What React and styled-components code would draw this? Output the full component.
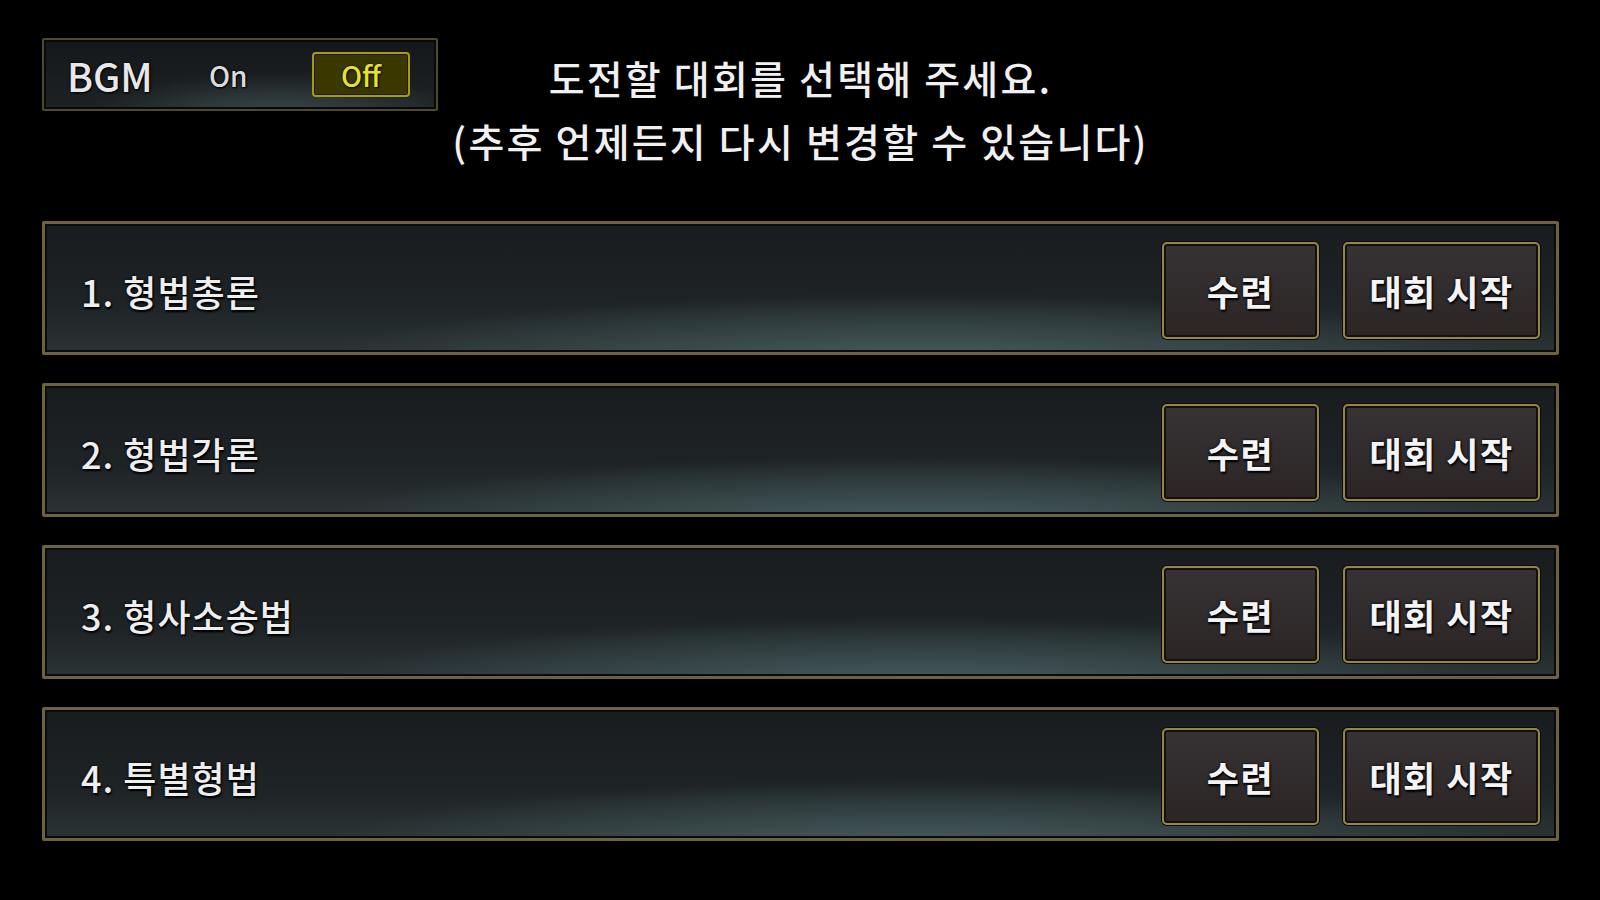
import React from "react";
import styled, { createGlobalStyle } from "styled-components";

const GlobalStyle = createGlobalStyle`
  html, body {
    margin: 0;
    padding: 0;
    background: #000;
  }
  body {
    font-family: "Noto Sans CJK KR", "Noto Sans", sans-serif;
    color: #f2f2f2;
  }
`;

const courses = [
  { id: 1, name: "형법총론" },
  { id: 2, name: "형법각론" },
  { id: 3, name: "형사소송법" },
  { id: 4, name: "특별형법" },
];

const Screen = styled.div`
  width: 1600px;
  height: 900px;
  box-sizing: border-box;
  padding: 38px 41px 0 42px;
  background: #000;
  overflow: hidden;
`;

const Header = styled.div`
  display: grid;
  grid-template-columns: 1fr auto 1fr;
  align-items: start;
`;

const BgmBox = styled.div`
  justify-self: start;
  width: 396px;
  height: 73px;
  box-sizing: border-box;
  display: flex;
  align-items: center;
  padding: 0 26px 0 23px;
  border: 2px solid #4f4930;
  box-shadow: inset 0 0 0 2px #08090a;
  border-radius: 2px;
  background: radial-gradient(
      ellipse 70% 90% at 60% 110%,
      rgba(70, 86, 88, 0.75),
      rgba(0, 0, 0, 0) 70%
    ),
    linear-gradient(#15181a, #1d2224);
`;

const BgmLabel = styled.span`
  font-size: 39px;
  font-weight: 500;
  color: #e8e8e8;
  text-shadow: 0 0 3px #000, 1px 1px 2px #000;
  width: 140px;
`;

const Toggle = styled.span`
  font-size: 28px;
  font-weight: 500;
  display: flex;
  align-items: center;
  justify-content: center;
  height: 45px;
  box-sizing: border-box;
  border-radius: 4px;
  color: ${(p) => (p.$active ? "#e6e22a" : "#dcdcdc")};
  background: ${(p) => (p.$active ? "#3a3800" : "transparent")};
  border: 2px solid ${(p) => (p.$active ? "#a59c12" : "transparent")};
  box-shadow: ${(p) => (p.$active ? "inset 0 0 0 1px #1c1b00" : "none")};
  text-shadow: 0 0 2px #000, 1px 1px 2px #000;
  width: ${(p) => (p.$active ? "98px" : "auto")};
  margin-left: ${(p) => (p.$active ? "auto" : "0")};
`;

const Title = styled.div`
  margin-top: 8px;
  text-align: center;
  font-size: 39px;
  line-height: 63px;
  font-weight: 500;
  color: #f0f0f0;
  letter-spacing: 2.2px;
`;

const List = styled.div`
  display: flex;
  flex-direction: column;
  gap: 28px;
  margin-top: 49px;
`;

const Row = styled.div`
  height: 134px;
  box-sizing: border-box;
  display: flex;
  align-items: center;
  padding: 5px 16px 0 36px;
  border: 3px solid #6c623e;
  border-radius: 2px;
  box-shadow: inset 0 0 0 2px #090b0c;
  background: radial-gradient(
      ellipse 55% 75% at 58% 108%,
      rgba(72, 94, 96, 0.95),
      rgba(0, 0, 0, 0) 72%
    ),
    linear-gradient(#191c1e 0%, #1e2325 60%, #2a3335 100%);
`;

const Name = styled.div`
  flex: 1;
  font-size: 36px;
  font-weight: 500;
  letter-spacing: 1px;
  color: #eeeeee;
  text-shadow: 0 0 3px #000, 1px 2px 2px #000;
`;

const Actions = styled.div`
  display: flex;
  gap: 24px;
`;

const ActionButton = styled.button`
  width: ${(p) => p.$width}px;
  height: 97px;
  box-sizing: border-box;
  font-family: "Noto Sans CJK KR", "Noto Sans", sans-serif;
  font-size: 35px;
  font-weight: 700;
  letter-spacing: 1.5px;
  color: #f4f4f4;
  text-shadow: 0 0 3px #000, 1px 2px 2px #000;
  border: 2px solid #958645;
  border-radius: 5px;
  box-shadow: 0 0 0 1px #0a0a0a, inset 0 0 0 2px #141010;
  background: linear-gradient(#373233, #2b2526);
  padding: 0;
  cursor: pointer;
`;

export default function App() {
  return (
    <>
      <GlobalStyle />
      <Screen>
        <Header>
          <BgmBox>
            <BgmLabel>BGM</BgmLabel>
            <Toggle>On</Toggle>
            <Toggle $active>Off</Toggle>
          </BgmBox>
          <Title>
            도전할 대회를 선택해 주세요.
            <br />
            (추후 언제든지 다시 변경할 수 있습니다)
          </Title>
          <div />
        </Header>
        <List>
          {courses.map((c) => (
            <Row key={c.id}>
              <Name>
                {c.id}. {c.name}
              </Name>
              <Actions>
                <ActionButton $width={157}>수련</ActionButton>
                <ActionButton $width={197}>대회 시작</ActionButton>
              </Actions>
            </Row>
          ))}
        </List>
      </Screen>
    </>
  );
}
